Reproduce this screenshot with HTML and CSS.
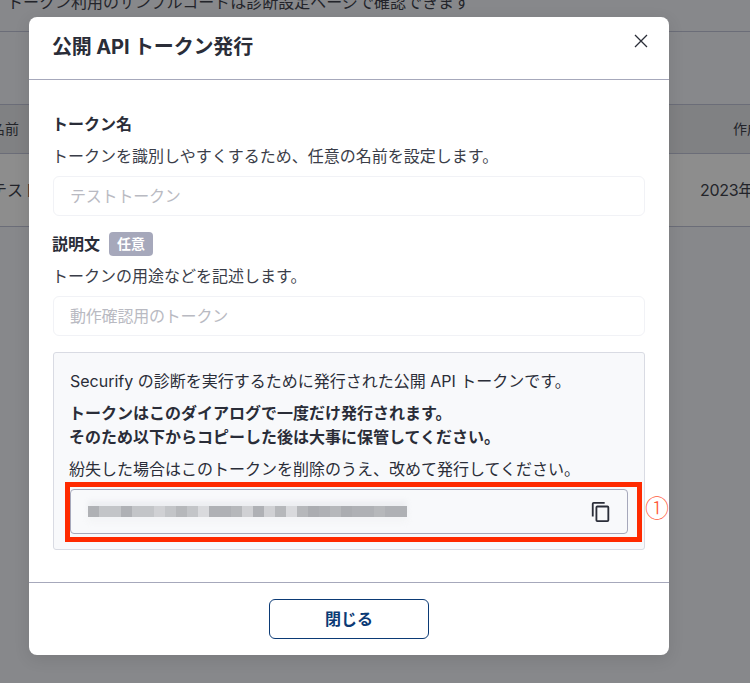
FILE: index.html
```html
<!DOCTYPE html>
<html lang="ja">
<head>
<meta charset="utf-8">
<title>公開 API トークン発行</title>
<link rel="stylesheet" href="styles.css">
</head>
<body>
<div class="page">
  <p class="page-note">トークン利用のサンプルコードは診断設定ページで確認できます</p>
  <div class="page-gap"></div>
  <div class="table-head"><span>名前</span><span class="col-date">作成日</span></div>
  <div class="table-row"><span>テスト</span><span class="col-date">2023年</span></div>
</div>
<div class="backdrop"></div>
<section class="modal">
  <header class="modal-head">
    <h1>公開 API トークン発行</h1>
    <svg class="close" viewBox="0 0 14 14" width="14" height="14"><path d="M1 1l12 12M13 1L1 13"/></svg>
  </header>
  <div class="modal-body">
    <div class="label-row"><span class="label">トークン名</span></div>
    <p class="desc">トークンを識別しやすくするため、任意の名前を設定します。</p>
    <div class="input">テストトークン</div>
    <div class="label-row second"><span class="label">説明文</span><span class="tag">任意</span></div>
    <p class="desc">トークンの用途などを記述します。</p>
    <div class="input">動作確認用のトークン</div>
    <div class="info">
      <p class="lead">Securify の診断を実行するために発行された公開 API トークンです。</p>
      <p class="strong">トークンはこのダイアログで一度だけ発行されます。<br>そのため以下からコピーした後は大事に保管してください。</p>
      <p>紛失した場合はこのトークンを削除のうえ、改めて発行してください。</p>
      <div class="token">
        <div class="mosaic">
          <i class="s1"></i><i class="s3"></i><i class="s3"></i><i class="s1"></i><i class="s3"></i><i class="s3"></i><i class="s4"></i><i class="s3"></i><i class="s2"></i><i class="s3"></i><i class="s5"></i><i class="s1"></i><i class="s1"></i><i class="s2"></i><i class="s4"></i><i class="s1"></i><i class="s4"></i><i class="s2"></i><i class="s5"></i><i class="s2"></i><i class="s0"></i><i class="s1"></i><i class="s2"></i><i class="s0"></i><i class="s1"></i><i class="s1"></i><i class="s2"></i><i class="s1"></i><i class="s1"></i>
        </div>
        <svg class="copy" viewBox="0 0 24 24" width="22" height="22"><path d="M16 1H4a2 2 0 0 0-2 2v14h2V3h12V1zm3 4H8a2 2 0 0 0-2 2v14a2 2 0 0 0 2 2h11a2 2 0 0 0 2-2V7a2 2 0 0 0-2-2zm0 16H8V7h11v14z"/></svg>
      </div>
    </div>
  </div>
  <footer class="modal-foot"><button class="close-btn" type="button">閉じる</button></footer>
</section>
<div class="annot-box"></div>
<div class="annot-num">①</div>
</body>
</html>
```
FILE: styles.css
```css
* { box-sizing: border-box; }
html, body { margin: 0; height: 683px; overflow: hidden; }
body {
  position: relative;
  font-family: Inter, "Noto Sans CJK JP", sans-serif;
  font-size: 16px;
  line-height: 24px;
  color: #2a2d38;
  background: #f2f4fa;
}
.page { height: 683px; overflow: hidden; }
.page-note { margin: -10px 0 0 7px; height: 41px; white-space: nowrap; line-height: 24px; }
.page-gap { height: 73px; border-top: 1px solid #babed4; }
.table-head, .table-row {
  display: flex;
  justify-content: space-between;
  align-items: center;
  border-top: 1px solid #babed4;
  white-space: nowrap;
}
.table-head { height: 49px; background: #e4e6ea; }
.table-head span:first-child { margin-left: -9px; font-size: 14px; }
.table-head .col-date { font-size: 14px; margin-right: -25px; }
.table-row { height: 74px; background: #fff; border-bottom: 1px solid #babed4; }
.table-row span:first-child { margin-left: -9px; }
.table-row .col-date { margin-right: -4px; letter-spacing: -0.3px; }
.backdrop { position: absolute; inset: 0; background: rgba(28, 28, 28, 0.5); }
.modal {
  position: absolute;
  left: 29px;
  top: 17px;
  width: 640px;
  height: 638px;
  background: #fff;
  border-radius: 8px;
  box-shadow: 0 4px 16px rgba(0, 0, 0, 0.1);
  display: flex;
  flex-direction: column;
}
.modal-head {
  height: 63px;
  flex: none;
  border-bottom: 1px solid #a6a8bb;
  padding: 15px 24px 0;
  display: flex;
  justify-content: space-between;
  align-items: flex-start;
}
.modal-head h1 { margin: 0 0 0 -1px; font-size: 20px; line-height: 30px; font-weight: 700; letter-spacing: -0.15px; }
.close { margin: 2px -3px 0 0; fill: none; stroke: #2a2d38; stroke-width: 1.3; }
.modal-body { flex: 1; padding: 32px 24px 0; }
.label-row { display: flex; align-items: center; gap: 9px; height: 24px; }
.label-row.second { margin-top: 16px; }
.label { font-weight: 700; margin-left: -1px; }
.tag {
  background: #a6a8bb;
  color: #fff;
  font-size: 14px;
  font-weight: 700;
  line-height: 24px;
  padding: 0 8px;
  border-radius: 4px;
}
.desc { margin: 8px 0 0 -1px; height: 24px; color: #3a3d48; }
.input {
  margin-top: 8px;
  height: 40px;
  border: 1px solid #f1f2f6;
  border-radius: 6px;
  padding: 7px 16px;
  color: #b9bac2;
  letter-spacing: -0.2px;
}
.info {
  margin-top: 16px;
  height: 198px;
  background: #f8f9fb;
  border: 1px solid #d9dbe3;
  border-radius: 3px;
  padding: 16px;
}
.info p { margin: 0 0 8px -1px; }
.info .lead { margin-left: 0; }
.info .strong { font-weight: 700; }
.token {
  height: 45px;
  margin-top: 8px;
  border: 1px solid #a6a8bb;
  border-radius: 4px;
  display: flex;
  align-items: center;
  justify-content: space-between;
  padding: 0 15px 0 17px;
}
.mosaic {
  display: flex;
  height: 11px;
  width: 319px;
  box-shadow: 0 -5px 5px rgba(225, 226, 230, 0.45), 0 5px 6px rgba(240, 241, 244, 0.6);
}
.mosaic i { flex: 1; }
.mosaic .s0 { background: #abadb1; }
.mosaic .s1 { background: #afb1b5; }
.mosaic .s2 { background: #b6b8bb; }
.mosaic .s3 { background: #c3c5c8; }
.mosaic .s4 { background: #d0d1d4; }
.mosaic .s5 { background: #d9dadd; }
.copy { fill: #2a2d38; }
.modal-foot {
  height: 73px;
  flex: none;
  border-top: 1px solid #a6a8bb;
  display: flex;
  justify-content: center;
  padding-top: 16px;
}
.close-btn {
  width: 160px;
  height: 40px;
  background: #fff;
  border: 1px solid #0b3a75;
  border-radius: 6px;
  color: #0b3a75;
  font: 700 16px/24px Inter, "Noto Sans CJK JP", sans-serif;
}
.annot-box {
  position: absolute;
  left: 65px;
  top: 482px;
  width: 577px;
  height: 60px;
  border: 5px solid #ff2a00;
}
.annot-num {
  position: absolute;
  left: 645px;
  top: 491px;
  width: 24px;
  text-align: center;
  font-family: "Noto Sans CJK JP", sans-serif;
  font-size: 24px;
  line-height: 32px;
  color: #ff5a3c;
  font-weight: 300;
}
```
